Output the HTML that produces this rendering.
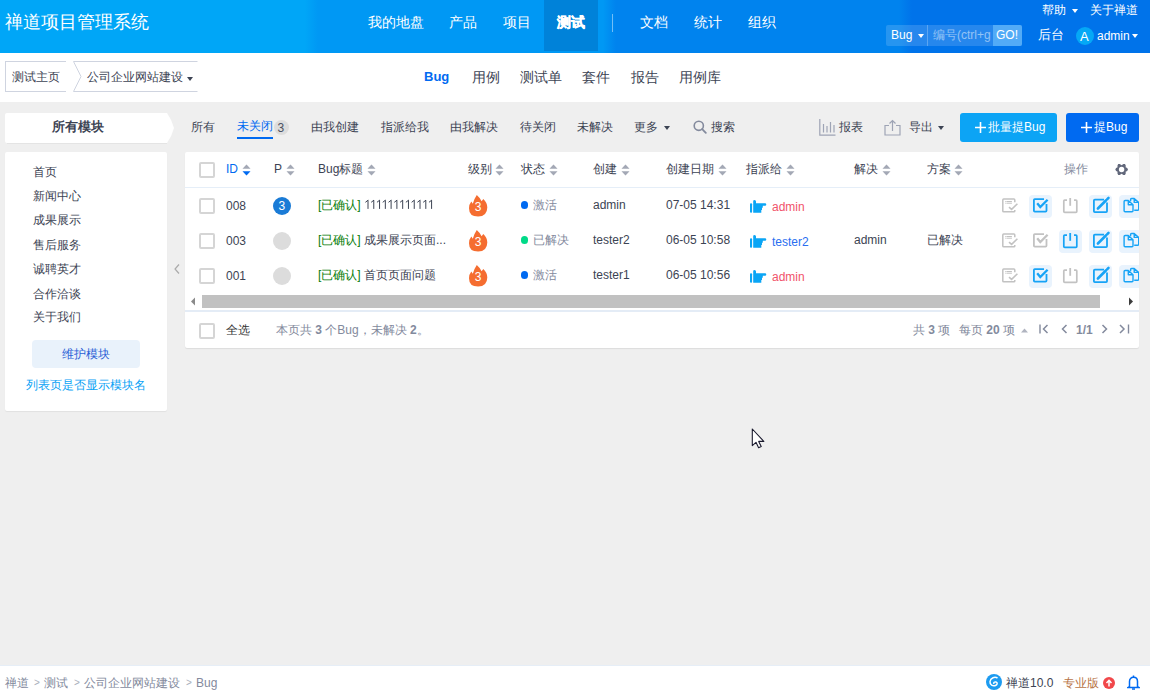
<!DOCTYPE html>
<html><head><meta charset="utf-8">
<style>
html,body{margin:0;padding:0;width:1150px;height:693px;overflow:hidden;background:#efefef;font-family:"Liberation Sans",sans-serif;color:#3c4353;}
.t{position:absolute;white-space:nowrap;line-height:1;}
.abs{position:absolute;}
#hdr{position:absolute;left:0;top:0;width:1150px;height:53px;background:linear-gradient(to right,#00a6f7 0,#00a6f7 305px,#0098f4 318px,#0098f4 603px,#0083ee 616px,#0083ee 899px,#0073ea 912px,#0073ea 1150px);}
#sub{position:absolute;left:0;top:53px;width:1150px;height:49px;background:#fff;}
.w{color:#fff;}
.cb{position:absolute;width:12px;height:12px;border:2px solid #d5d5d5;border-radius:2px;background:#fff;}
.sort{position:absolute;width:8px;height:11px;}
#foot{position:absolute;left:0;top:665px;width:1150px;height:28px;background:#fff;border-top:1px solid #e6eef7;box-sizing:border-box;}
</style></head><body>
<!-- header -->
<div id="hdr">
  <div class="t w" style="left:5px;top:13px;font-size:18px;">禅道项目管理系统</div>
  <div class="t w" style="left:368px;top:15px;font-size:14px;">我的地盘</div>
  <div class="t w" style="left:449px;top:15px;font-size:14px;">产品</div>
  <div class="t w" style="left:503px;top:15px;font-size:14px;">项目</div>
  <div class="abs" style="left:544px;top:0;width:54px;height:51px;background:#0082d9;"></div>
  <div class="t w" style="left:557px;top:15px;font-size:14px;font-weight:bold;-webkit-text-stroke:0.4px #fff;">测试</div>
  <div class="abs" style="left:612px;top:14px;width:1px;height:18px;background:rgba(255,255,255,.45);"></div>
  <div class="t w" style="left:640px;top:15px;font-size:14px;">文档</div>
  <div class="t w" style="left:694px;top:15px;font-size:14px;">统计</div>
  <div class="t w" style="left:748px;top:15px;font-size:14px;">组织</div>
  <div class="t w" style="left:1042px;top:4px;font-size:12px;">帮助</div>
  <div class="abs" style="left:1072px;top:9px;width:0;height:0;border-left:3.5px solid transparent;border-right:3.5px solid transparent;border-top:4px solid #fff;"></div>
  <div class="t w" style="left:1090px;top:4px;font-size:12px;">关于禅道</div>
  <div class="abs" style="left:886px;top:25px;width:136px;height:21px;background:rgba(255,255,255,.15);border-radius:2px;"></div>
  <div class="t w" style="left:891px;top:29px;font-size:12px;">Bug</div>
  <div class="abs" style="left:918px;top:34px;width:0;height:0;border-left:3.5px solid transparent;border-right:3.5px solid transparent;border-top:4px solid #fff;"></div>
  <div class="abs" style="left:927px;top:25px;width:1px;height:21px;background:rgba(255,255,255,.25);"></div>
  <div class="t" style="left:933px;top:29px;font-size:12px;color:rgba(255,255,255,.5);">编号(ctrl+g</div>
  <div class="abs" style="left:993px;top:25px;width:29px;height:21px;background:#52abf7;border-radius:0 2px 2px 0;"></div>
  <div class="t w" style="left:996px;top:29px;font-size:12px;">GO!</div>
  <div class="t w" style="left:1038px;top:28px;font-size:13px;">后台</div>
  <div class="abs" style="left:1076px;top:27px;width:18px;height:18px;border-radius:50%;background:#05a8f6;"></div>
  <div class="t w" style="left:1080px;top:30px;font-size:13px;">A</div>
  <div class="t w" style="left:1097px;top:30px;font-size:12px;">admin</div>
  <div class="abs" style="left:1132px;top:34px;width:0;height:0;border-left:3.5px solid transparent;border-right:3.5px solid transparent;border-top:4px solid #fff;"></div>
</div>
<!-- subheader -->
<div id="sub">
  <div class="abs" style="left:5px;top:8px;width:60px;height:29px;border:1px solid #cfd4e0;border-right:none;"></div>
  <div class="t" style="left:12px;top:18px;font-size:12px;">测试主页</div>
  <svg class="abs" style="left:73px;top:8px" width="125" height="31"><path d="M124.5 0.5 H0.5 L8 15.5 L0.5 30.5 H124.5" fill="none" stroke="#cfd4e0"/></svg>
  <div class="t" style="left:87px;top:18px;font-size:12px;">公司企业网站建设</div>
  <div class="abs" style="left:187px;top:24px;width:0;height:0;border-left:3.5px solid transparent;border-right:3.5px solid transparent;border-top:4px solid #3c4353;"></div>
  <div class="t" style="left:424px;top:17px;font-size:13px;font-weight:bold;color:#006af1;">Bug</div>
  <div class="t" style="left:472px;top:17px;font-size:14px;">用例</div>
  <div class="t" style="left:520px;top:17px;font-size:14px;">测试单</div>
  <div class="t" style="left:582px;top:17px;font-size:14px;">套件</div>
  <div class="t" style="left:631px;top:17px;font-size:14px;">报告</div>
  <div class="t" style="left:679px;top:17px;font-size:14px;">用例库</div>
</div>
<!-- sidebar -->
<svg class="abs" style="left:5px;top:113px" width="170" height="31"><path d="M2 0 H162 Q167 7 169 15 Q167 23 162 30 H2 Q0 30 0 28 V2 Q0 0 2 0Z" fill="#fff"/><path d="M2 30.5 H162" stroke="#e4e4e4"/></svg>
<div class="t" style="left:52px;top:121px;font-size:12.5px;font-weight:bold;">所有模块</div>
<div class="abs" style="left:5px;top:152px;width:162px;height:259px;background:#fff;border-radius:2px;box-shadow:0 1px 1px rgba(0,0,0,.06);"></div>
<div class="t" style="left:33px;top:166px;font-size:12px;">首页</div>
<div class="t" style="left:33px;top:190px;font-size:12px;">新闻中心</div>
<div class="t" style="left:33px;top:214px;font-size:12px;">成果展示</div>
<div class="t" style="left:33px;top:239px;font-size:12px;">售后服务</div>
<div class="t" style="left:33px;top:263px;font-size:12px;">诚聘英才</div>
<div class="t" style="left:33px;top:288px;font-size:12px;">合作洽谈</div>
<div class="t" style="left:33px;top:311px;font-size:12px;">关于我们</div>
<div class="abs" style="left:32px;top:340px;width:108px;height:28px;background:#e9f2fb;border-radius:4px;"></div>
<div class="t" style="left:62px;top:347.5px;font-size:12px;color:#2a5fd6;">维护模块</div>
<div class="t" style="left:26px;top:379px;font-size:12px;color:#0aa2f5;">列表页是否显示模块名</div>
<svg class="abs" style="left:174px;top:264px" width="6" height="10"><path d="M5 0.5 L1 5 L5 9.5" fill="none" stroke="#aaa" stroke-width="1.2"/></svg>

<!-- toolbar -->
<div class="t" style="left:191px;top:121px;font-size:12px;">所有</div>
<div class="t" style="left:237px;top:120px;font-size:12px;color:#006af1;">未关闭</div>
<div class="abs" style="left:237px;top:137px;width:36px;height:2px;background:#006af1;"></div>
<div class="abs" style="left:273.5px;top:120px;width:15px;height:15px;border-radius:50%;background:#ddd;"></div>
<div class="t" style="left:277.5px;top:122px;font-size:12px;color:#4a5060;">3</div>
<div class="t" style="left:311px;top:121px;font-size:12px;">由我创建</div>
<div class="t" style="left:381px;top:121px;font-size:12px;">指派给我</div>
<div class="t" style="left:450px;top:121px;font-size:12px;">由我解决</div>
<div class="t" style="left:520px;top:121px;font-size:12px;">待关闭</div>
<div class="t" style="left:577px;top:121px;font-size:12px;">未解决</div>
<div class="t" style="left:634px;top:121px;font-size:12px;">更多</div>
<div class="abs" style="left:664px;top:126px;width:0;height:0;border-left:3.5px solid transparent;border-right:3.5px solid transparent;border-top:4px solid #3c4353;"></div>
<svg class="abs" style="left:693px;top:120px" width="14" height="14"><circle cx="5.8" cy="5.8" r="4.6" fill="none" stroke="#838a9d" stroke-width="1.6"/><path d="M9.2 9.2 L12.8 12.8" stroke="#838a9d" stroke-width="1.8" stroke-linecap="round"/></svg>
<div class="t" style="left:711px;top:121px;font-size:12px;">搜索</div>
<svg class="abs" style="left:819px;top:119px" width="17" height="17"><path d="M0.8 0 V16.2 H16.5" fill="none" stroke="#9ea4b5" stroke-width="1.2"/><path d="M4.5 5 V13.5 M8 7 V13.5 M11.5 3 V13.5 M15 6 V13.5" stroke="#9ea4b5" stroke-width="1.2"/></svg>
<div class="t" style="left:839px;top:121px;font-size:12px;">报表</div>
<svg class="abs" style="left:884px;top:119px" width="17" height="17"><path d="M5 6.5 H1 V16 H16 V6.5 H12" fill="none" stroke="#9ea4b5" stroke-width="1.2"/><path d="M8.5 12 V1.5 M5.5 4.5 L8.5 1.5 L11.5 4.5" fill="none" stroke="#9ea4b5" stroke-width="1.2"/></svg>
<div class="t" style="left:909px;top:121px;font-size:12px;">导出</div>
<div class="abs" style="left:938px;top:126px;width:0;height:0;border-left:3.5px solid transparent;border-right:3.5px solid transparent;border-top:4px solid #3c4353;"></div>
<div class="abs" style="left:960px;top:113px;width:97px;height:29px;background:#0ca4f5;border-radius:3px;"></div>
<svg class="abs" style="left:975px;top:122px" width="11" height="11"><path d="M5.5 0 V11 M0 5.5 H11" stroke="#fff" stroke-width="1.6"/></svg>
<div class="t w" style="left:988px;top:121px;font-size:12px;">批量提Bug</div>
<div class="abs" style="left:1066px;top:113px;width:73px;height:29px;background:#006af1;border-radius:3px;"></div>
<svg class="abs" style="left:1081px;top:122px" width="11" height="11"><path d="M5.5 0 V11 M0 5.5 H11" stroke="#fff" stroke-width="1.6"/></svg>
<div class="t w" style="left:1094px;top:121px;font-size:12px;">提Bug</div>

<!-- table panel -->
<div class="abs" style="left:185px;top:152px;width:954px;height:196px;background:#fff;border-radius:2px;box-shadow:0 1px 1px rgba(0,0,0,.08);"></div>
<div class="abs" style="left:185px;top:187px;width:954px;height:1px;background:#e5eef8;"></div>
<div class="cb" style="left:199px;top:162px;"></div>
<div class="t" style="left:226px;top:163px;font-size:12px;color:#006af1;">ID</div>
<svg class="abs" style="left:241.5px;top:163.5px" width="9" height="12"><path d="M4.5 0.5 L8.5 4.8 H0.5Z" fill="#a3a8b5"/><path d="M4.5 11.5 L8.5 7.2 H0.5Z" fill="#006af1"/></svg>
<div class="t" style="left:274px;top:163px;font-size:12px;">P</div>
<svg class="abs" style="left:285.5px;top:163.5px" width="9" height="12"><path d="M4.5 0.5 L8.5 4.8 H0.5Z" fill="#a3a8b5"/><path d="M4.5 11.5 L8.5 7.2 H0.5Z" fill="#a3a8b5"/></svg>
<div class="t" style="left:318px;top:163px;font-size:12px;">Bug标题</div>
<svg class="abs" style="left:366.5px;top:163.5px" width="9" height="12"><path d="M4.5 0.5 L8.5 4.8 H0.5Z" fill="#a3a8b5"/><path d="M4.5 11.5 L8.5 7.2 H0.5Z" fill="#a3a8b5"/></svg>
<div class="t" style="left:468px;top:163px;font-size:12px;">级别</div>
<svg class="abs" style="left:495px;top:163.5px" width="9" height="12"><path d="M4.5 0.5 L8.5 4.8 H0.5Z" fill="#a3a8b5"/><path d="M4.5 11.5 L8.5 7.2 H0.5Z" fill="#a3a8b5"/></svg>
<div class="t" style="left:521px;top:163px;font-size:12px;">状态</div>
<svg class="abs" style="left:548.5px;top:163.5px" width="9" height="12"><path d="M4.5 0.5 L8.5 4.8 H0.5Z" fill="#a3a8b5"/><path d="M4.5 11.5 L8.5 7.2 H0.5Z" fill="#a3a8b5"/></svg>
<div class="t" style="left:593px;top:163px;font-size:12px;">创建</div>
<svg class="abs" style="left:620.5px;top:163.5px" width="9" height="12"><path d="M4.5 0.5 L8.5 4.8 H0.5Z" fill="#a3a8b5"/><path d="M4.5 11.5 L8.5 7.2 H0.5Z" fill="#a3a8b5"/></svg>
<div class="t" style="left:666px;top:163px;font-size:12px;">创建日期</div>
<svg class="abs" style="left:717.5px;top:163.5px" width="9" height="12"><path d="M4.5 0.5 L8.5 4.8 H0.5Z" fill="#a3a8b5"/><path d="M4.5 11.5 L8.5 7.2 H0.5Z" fill="#a3a8b5"/></svg>
<div class="t" style="left:746px;top:163px;font-size:12px;">指派给</div>
<svg class="abs" style="left:785.5px;top:163.5px" width="9" height="12"><path d="M4.5 0.5 L8.5 4.8 H0.5Z" fill="#a3a8b5"/><path d="M4.5 11.5 L8.5 7.2 H0.5Z" fill="#a3a8b5"/></svg>
<div class="t" style="left:854px;top:163px;font-size:12px;">解决</div>
<svg class="abs" style="left:881.5px;top:163.5px" width="9" height="12"><path d="M4.5 0.5 L8.5 4.8 H0.5Z" fill="#a3a8b5"/><path d="M4.5 11.5 L8.5 7.2 H0.5Z" fill="#a3a8b5"/></svg>
<div class="t" style="left:927px;top:163px;font-size:12px;">方案</div>
<svg class="abs" style="left:954px;top:163.5px" width="9" height="12"><path d="M4.5 0.5 L8.5 4.8 H0.5Z" fill="#a3a8b5"/><path d="M4.5 11.5 L8.5 7.2 H0.5Z" fill="#a3a8b5"/></svg>
<div class="t" style="left:1064px;top:163px;font-size:12px;color:#838a9d;">操作</div>
<svg class="abs" style="left:1114px;top:163px" width="16" height="14"><path fill-rule="evenodd" fill="#62687b" d="M4.2 1 L5.8 1 L7.6 2.2 L9.4 1 L11 1 L11.8 2.7 L11.6 4.2 L13.2 5 L14 6.5 L13.2 8 L11.6 8.8 L11.8 10.3 L11 12 L9.4 12 L7.6 10.8 L5.8 12 L4.2 12 L3.4 10.3 L3.6 8.8 L2.1 8 L1.3 6.5 L2.1 5 L3.6 4.2 L3.4 2.7Z M10.3 6.5 A2.7 2.7 0 1 0 4.9 6.5 A2.7 2.7 0 1 0 10.3 6.5Z"/></svg>
<div class="cb" style="left:199px;top:198px;"></div>
<div class="t" style="left:226px;top:200px;font-size:12px;">008</div>
<div class="abs" style="left:273px;top:197px;width:18px;height:18px;border-radius:50%;background:#1a7bd6;"></div><div class="t w" style="left:278.5px;top:200px;font-size:12px;">3</div>
<div class="t" style="left:318px;top:199px;font-size:12px;"><span style="color:#067c06">[已确认]</span> </div>
<svg class="abs" style="left:364px;top:199px" width="72" height="12"><path d="M4.00 1.2 V9.9 M1.40 3.3 L4.20 1.1 M9.78 1.2 V9.9 M7.18 3.3 L9.98 1.1 M15.56 1.2 V9.9 M12.96 3.3 L15.76 1.1 M21.34 1.2 V9.9 M18.74 3.3 L21.54 1.1 M27.12 1.2 V9.9 M24.52 3.3 L27.32 1.1 M32.90 1.2 V9.9 M30.30 3.3 L33.10 1.1 M38.68 1.2 V9.9 M36.08 3.3 L38.88 1.1 M44.46 1.2 V9.9 M41.86 3.3 L44.66 1.1 M50.24 1.2 V9.9 M47.64 3.3 L50.44 1.1 M56.02 1.2 V9.9 M53.42 3.3 L56.22 1.1 M61.80 1.2 V9.9 M59.20 3.3 L62.00 1.1 M67.58 1.2 V9.9 M64.98 3.3 L67.78 1.1 " fill="none" stroke="#3c4353" stroke-width="1"/></svg>
<svg class="abs" style="left:464px;top:192px" width="28" height="27"><path d="M12.8 2.9 Q15.6 5.2 17.6 9.3 L19.3 7.1 Q23.3 10.8 23.3 15.6 Q23.1 24.6 14.1 24.6 Q5 24.5 5 16.2 Q5 12.2 7.3 9.4 L8.8 11.7 Q10.4 6.2 12.8 2.9Z" fill="#f56d30"/><text x="14.1" y="19.1" font-size="12" text-anchor="middle" fill="#fff" font-family="Liberation Sans">3</text></svg>
<div class="abs" style="left:521px;top:201px;width:7px;height:8px;border-radius:3.5px;background:#006af1;"></div>
<div class="t" style="left:533px;top:199px;font-size:12px;color:#838a9d;">激活</div>
<div class="t" style="left:593px;top:199px;font-size:12px;">admin</div>
<div class="t" style="left:666px;top:199px;font-size:12px;">07-05 14:31</div>
<svg class="abs" style="left:747px;top:197px" width="22" height="18"><rect x="3" y="6.2" width="2.1" height="9.6" rx="1" fill="#0aa5f5"/><path d="M6.2 15.8 V4.2 Q6.2 3 7.5 3 Q9 3.1 9 4.6 V6.2 H18 Q19.3 6.2 19.3 7.45 Q19.3 8.7 18 8.7 H15.8 V10.7 H15 V12.9 H14.3 V15.8Z" fill="#0aa5f5"/></svg>
<div class="t" style="left:772px;top:201px;font-size:12px;color:#f1526b;">admin</div>
<div class="cb" style="left:199px;top:233px;"></div>
<div class="t" style="left:226px;top:235px;font-size:12px;">003</div>
<div class="abs" style="left:273px;top:232px;width:18px;height:18px;border-radius:50%;background:#dcdcdc;"></div>
<div class="t" style="left:318px;top:234px;font-size:12px;"><span style="color:#067c06">[已确认]</span> 成果展示页面...</div>
<svg class="abs" style="left:464px;top:227px" width="28" height="27"><path d="M12.8 2.9 Q15.6 5.2 17.6 9.3 L19.3 7.1 Q23.3 10.8 23.3 15.6 Q23.1 24.6 14.1 24.6 Q5 24.5 5 16.2 Q5 12.2 7.3 9.4 L8.8 11.7 Q10.4 6.2 12.8 2.9Z" fill="#f56d30"/><text x="14.1" y="19.1" font-size="12" text-anchor="middle" fill="#fff" font-family="Liberation Sans">3</text></svg>
<div class="abs" style="left:521px;top:236px;width:7px;height:8px;border-radius:3.5px;background:#00da88;"></div>
<div class="t" style="left:533px;top:234px;font-size:12px;color:#838a9d;">已解决</div>
<div class="t" style="left:593px;top:234px;font-size:12px;">tester2</div>
<div class="t" style="left:666px;top:234px;font-size:12px;">06-05 10:58</div>
<svg class="abs" style="left:747px;top:232px" width="22" height="18"><rect x="3" y="6.2" width="2.1" height="9.6" rx="1" fill="#0aa5f5"/><path d="M6.2 15.8 V4.2 Q6.2 3 7.5 3 Q9 3.1 9 4.6 V6.2 H18 Q19.3 6.2 19.3 7.45 Q19.3 8.7 18 8.7 H15.8 V10.7 H15 V12.9 H14.3 V15.8Z" fill="#0aa5f5"/></svg>
<div class="t" style="left:772px;top:236px;font-size:12px;color:#2a6ef0;">tester2</div>
<div class="t" style="left:854px;top:234px;font-size:12px;">admin</div>
<div class="t" style="left:927px;top:234px;font-size:12px;">已解决</div>
<div class="cb" style="left:199px;top:268px;"></div>
<div class="t" style="left:226px;top:270px;font-size:12px;">001</div>
<div class="abs" style="left:273px;top:267px;width:18px;height:18px;border-radius:50%;background:#dcdcdc;"></div>
<div class="t" style="left:318px;top:269px;font-size:12px;"><span style="color:#067c06">[已确认]</span> 首页页面问题</div>
<svg class="abs" style="left:464px;top:262px" width="28" height="27"><path d="M12.8 2.9 Q15.6 5.2 17.6 9.3 L19.3 7.1 Q23.3 10.8 23.3 15.6 Q23.1 24.6 14.1 24.6 Q5 24.5 5 16.2 Q5 12.2 7.3 9.4 L8.8 11.7 Q10.4 6.2 12.8 2.9Z" fill="#f56d30"/><text x="14.1" y="19.1" font-size="12" text-anchor="middle" fill="#fff" font-family="Liberation Sans">3</text></svg>
<div class="abs" style="left:521px;top:271px;width:7px;height:8px;border-radius:3.5px;background:#006af1;"></div>
<div class="t" style="left:533px;top:269px;font-size:12px;color:#838a9d;">激活</div>
<div class="t" style="left:593px;top:269px;font-size:12px;">tester1</div>
<div class="t" style="left:666px;top:269px;font-size:12px;">06-05 10:56</div>
<svg class="abs" style="left:747px;top:267px" width="22" height="18"><rect x="3" y="6.2" width="2.1" height="9.6" rx="1" fill="#0aa5f5"/><path d="M6.2 15.8 V4.2 Q6.2 3 7.5 3 Q9 3.1 9 4.6 V6.2 H18 Q19.3 6.2 19.3 7.45 Q19.3 8.7 18 8.7 H15.8 V10.7 H15 V12.9 H14.3 V15.8Z" fill="#0aa5f5"/></svg>
<div class="t" style="left:772px;top:271px;font-size:12px;color:#f1526b;">admin</div>
<div class="abs" style="left:995px;top:188px;width:144px;height:106px;overflow:hidden;">
<svg class="abs" style="left:4px;top:7px" width="23" height="23"><path d="M15.8 7.2 V5 Q15.8 4.1 14.9 4.1 H4.7 Q3.8 4.1 3.8 5 V15.9 Q3.8 16.8 4.7 16.8 H14.9 Q15.8 16.8 15.8 15.9 V15" fill="none" stroke="#c2c2c2" stroke-width="1.5"/><path d="M6.1 6.5 H6.8 M7.4 6.5 H12.9 M6.1 8.2 H6.8 M7.4 8.2 H12.9" stroke="#c2c2c2" stroke-width="1"/><path d="M10 12.1 L12.6 14.4 L18.4 8.7" fill="none" stroke="#c2c2c2" stroke-width="1.6"/></svg>
<div class="abs" style="left:34px;top:7px;width:23px;height:23px;background:#e9f3fd;border-radius:4px;"></div>
<svg class="abs" style="left:34px;top:7px" width="23" height="23"><path d="M15 4.2 H5.8 Q4.9 4.2 4.9 5.1 V15.8 Q4.9 16.7 5.8 16.7 H16.6 Q17.5 16.7 17.5 15.8 V9" fill="none" stroke="#16a3f6" stroke-width="1.8"/><path d="M8.2 8.2 L11.3 12 L18.6 4.8" fill="none" stroke="#16a3f6" stroke-width="2.3"/></svg>
<svg class="abs" style="left:64px;top:7px" width="23" height="23"><path d="M8 5.1 H5.7 Q4.8 5.1 4.8 6 V16.4 Q4.8 17.3 5.7 17.3 H16.9 Q17.8 17.3 17.8 16.4 V6 Q17.8 5.1 16.9 5.1 H15" fill="none" stroke="#c2c2c2" stroke-width="1.7"/><path d="M11.2 3 V10.8" stroke="#c2c2c2" stroke-width="1.8"/></svg>
<div class="abs" style="left:94px;top:7px;width:23px;height:23px;background:#e9f3fd;border-radius:4px;"></div>
<svg class="abs" style="left:94px;top:7px" width="23" height="23"><path d="M15 4.7 H5.8 Q4.9 4.7 4.9 5.6 V16.3 Q4.9 17.2 5.8 17.2 H17.1 Q18 17.2 18 16.3 V7.4" fill="none" stroke="#16a3f6" stroke-width="1.8"/><path d="M8.9 13.5 L16.9 5.5 M18.1 4.3 L19.5 2.9" stroke="#16a3f6" stroke-width="2.6" stroke-linecap="round"/></svg>
<div class="abs" style="left:124px;top:7px;width:23px;height:23px;background:#e9f3fd;border-radius:4px;"></div>
<svg class="abs" style="left:124px;top:7px" width="23" height="23"><path d="M9.3 5.5 H6.1 Q5.1 5.5 5.1 6.5 V15.8 Q5.1 16.8 6.1 16.8 H13 Q14 16.8 14 15.8 V9.8 Z M9.3 5.5 V9.8 H14 M9.3 5.5 L14 9.8" fill="none" stroke="#16a3f6" stroke-width="1.4" stroke-linejoin="round"/><path d="M11.6 6.3 V4.5 Q11.6 3.5 12.6 3.5 H15.2 L19.7 7.4 V14.2 Q19.7 15.2 18.7 15.2 H15.2 M15.2 3.5 V7.4 H19.7" fill="none" stroke="#16a3f6" stroke-width="1.4" stroke-linejoin="round"/></svg>
<svg class="abs" style="left:4px;top:42px" width="23" height="23"><path d="M15.8 7.2 V5 Q15.8 4.1 14.9 4.1 H4.7 Q3.8 4.1 3.8 5 V15.9 Q3.8 16.8 4.7 16.8 H14.9 Q15.8 16.8 15.8 15.9 V15" fill="none" stroke="#c2c2c2" stroke-width="1.5"/><path d="M6.1 6.5 H6.8 M7.4 6.5 H12.9 M6.1 8.2 H6.8 M7.4 8.2 H12.9" stroke="#c2c2c2" stroke-width="1"/><path d="M10 12.1 L12.6 14.4 L18.4 8.7" fill="none" stroke="#c2c2c2" stroke-width="1.6"/></svg>
<svg class="abs" style="left:34px;top:42px" width="23" height="23"><path d="M15 4.2 H5.8 Q4.9 4.2 4.9 5.1 V15.8 Q4.9 16.7 5.8 16.7 H16.6 Q17.5 16.7 17.5 15.8 V9" fill="none" stroke="#c2c2c2" stroke-width="1.8"/><path d="M8.2 8.2 L11.3 12 L18.6 4.8" fill="none" stroke="#c2c2c2" stroke-width="2.3"/></svg>
<div class="abs" style="left:64px;top:42px;width:23px;height:23px;background:#e9f3fd;border-radius:4px;"></div>
<svg class="abs" style="left:64px;top:42px" width="23" height="23"><path d="M8 5.1 H5.7 Q4.8 5.1 4.8 6 V16.4 Q4.8 17.3 5.7 17.3 H16.9 Q17.8 17.3 17.8 16.4 V6 Q17.8 5.1 16.9 5.1 H15" fill="none" stroke="#16a3f6" stroke-width="1.7"/><path d="M11.2 3 V10.8" stroke="#16a3f6" stroke-width="1.8"/></svg>
<div class="abs" style="left:94px;top:42px;width:23px;height:23px;background:#e9f3fd;border-radius:4px;"></div>
<svg class="abs" style="left:94px;top:42px" width="23" height="23"><path d="M15 4.7 H5.8 Q4.9 4.7 4.9 5.6 V16.3 Q4.9 17.2 5.8 17.2 H17.1 Q18 17.2 18 16.3 V7.4" fill="none" stroke="#16a3f6" stroke-width="1.8"/><path d="M8.9 13.5 L16.9 5.5 M18.1 4.3 L19.5 2.9" stroke="#16a3f6" stroke-width="2.6" stroke-linecap="round"/></svg>
<div class="abs" style="left:124px;top:42px;width:23px;height:23px;background:#e9f3fd;border-radius:4px;"></div>
<svg class="abs" style="left:124px;top:42px" width="23" height="23"><path d="M9.3 5.5 H6.1 Q5.1 5.5 5.1 6.5 V15.8 Q5.1 16.8 6.1 16.8 H13 Q14 16.8 14 15.8 V9.8 Z M9.3 5.5 V9.8 H14 M9.3 5.5 L14 9.8" fill="none" stroke="#16a3f6" stroke-width="1.4" stroke-linejoin="round"/><path d="M11.6 6.3 V4.5 Q11.6 3.5 12.6 3.5 H15.2 L19.7 7.4 V14.2 Q19.7 15.2 18.7 15.2 H15.2 M15.2 3.5 V7.4 H19.7" fill="none" stroke="#16a3f6" stroke-width="1.4" stroke-linejoin="round"/></svg>
<svg class="abs" style="left:4px;top:77px" width="23" height="23"><path d="M15.8 7.2 V5 Q15.8 4.1 14.9 4.1 H4.7 Q3.8 4.1 3.8 5 V15.9 Q3.8 16.8 4.7 16.8 H14.9 Q15.8 16.8 15.8 15.9 V15" fill="none" stroke="#c2c2c2" stroke-width="1.5"/><path d="M6.1 6.5 H6.8 M7.4 6.5 H12.9 M6.1 8.2 H6.8 M7.4 8.2 H12.9" stroke="#c2c2c2" stroke-width="1"/><path d="M10 12.1 L12.6 14.4 L18.4 8.7" fill="none" stroke="#c2c2c2" stroke-width="1.6"/></svg>
<div class="abs" style="left:34px;top:77px;width:23px;height:23px;background:#e9f3fd;border-radius:4px;"></div>
<svg class="abs" style="left:34px;top:77px" width="23" height="23"><path d="M15 4.2 H5.8 Q4.9 4.2 4.9 5.1 V15.8 Q4.9 16.7 5.8 16.7 H16.6 Q17.5 16.7 17.5 15.8 V9" fill="none" stroke="#16a3f6" stroke-width="1.8"/><path d="M8.2 8.2 L11.3 12 L18.6 4.8" fill="none" stroke="#16a3f6" stroke-width="2.3"/></svg>
<svg class="abs" style="left:64px;top:77px" width="23" height="23"><path d="M8 5.1 H5.7 Q4.8 5.1 4.8 6 V16.4 Q4.8 17.3 5.7 17.3 H16.9 Q17.8 17.3 17.8 16.4 V6 Q17.8 5.1 16.9 5.1 H15" fill="none" stroke="#c2c2c2" stroke-width="1.7"/><path d="M11.2 3 V10.8" stroke="#c2c2c2" stroke-width="1.8"/></svg>
<div class="abs" style="left:94px;top:77px;width:23px;height:23px;background:#e9f3fd;border-radius:4px;"></div>
<svg class="abs" style="left:94px;top:77px" width="23" height="23"><path d="M15 4.7 H5.8 Q4.9 4.7 4.9 5.6 V16.3 Q4.9 17.2 5.8 17.2 H17.1 Q18 17.2 18 16.3 V7.4" fill="none" stroke="#16a3f6" stroke-width="1.8"/><path d="M8.9 13.5 L16.9 5.5 M18.1 4.3 L19.5 2.9" stroke="#16a3f6" stroke-width="2.6" stroke-linecap="round"/></svg>
<div class="abs" style="left:124px;top:77px;width:23px;height:23px;background:#e9f3fd;border-radius:4px;"></div>
<svg class="abs" style="left:124px;top:77px" width="23" height="23"><path d="M9.3 5.5 H6.1 Q5.1 5.5 5.1 6.5 V15.8 Q5.1 16.8 6.1 16.8 H13 Q14 16.8 14 15.8 V9.8 Z M9.3 5.5 V9.8 H14 M9.3 5.5 L14 9.8" fill="none" stroke="#16a3f6" stroke-width="1.4" stroke-linejoin="round"/><path d="M11.6 6.3 V4.5 Q11.6 3.5 12.6 3.5 H15.2 L19.7 7.4 V14.2 Q19.7 15.2 18.7 15.2 H15.2 M15.2 3.5 V7.4 H19.7" fill="none" stroke="#16a3f6" stroke-width="1.4" stroke-linejoin="round"/></svg>
</div>
<div class="abs" style="left:186px;top:294px;width:952px;height:15px;background:#fff;"></div>
<div class="abs" style="left:202px;top:295px;width:898px;height:13px;background:#c1c1c1;"></div>
<svg class="abs" style="left:190px;top:297px" width="7" height="9"><path d="M5 0.5 V8.5 L1 4.5Z" fill="#8a8a8a"/></svg>
<svg class="abs" style="left:1128px;top:297px" width="7" height="9"><path d="M1 0.5 V8.5 L5 4.5Z" fill="#3c3c3c"/></svg>
<div class="abs" style="left:185px;top:310px;width:954px;height:2px;background:#e4ecf6;"></div>
<div class="cb" style="left:199px;top:323px;"></div>
<div class="t" style="left:226px;top:324px;font-size:12px;color:#333;">全选</div>
<div class="t" style="left:276px;top:324px;font-size:12px;color:#838a9d;">本页共 <b>3</b> 个Bug，未解决 <b>2</b>。</div>
<div class="t" style="left:913px;top:324px;font-size:12px;color:#838a9d;">共 <b>3</b> 项</div>
<div class="t" style="left:959px;top:324px;font-size:12px;color:#838a9d;">每页 <b>20</b> 项</div>
<svg class="abs" style="left:1021px;top:328px" width="7" height="5"><path d="M0 4.5 L3.5 0.5 L7 4.5Z" fill="#b0b4c0"/></svg>
<svg class="abs" style="left:1039px;top:324px" width="10" height="10"><path d="M1 0.5 V9.5" stroke="#838a9d" stroke-width="1.4"/><path d="M8.5 1 L4.5 5 L8.5 9" fill="none" stroke="#838a9d" stroke-width="1.5"/></svg>
<svg class="abs" style="left:1060px;top:324px" width="8" height="10"><path d="M6.5 1 L2.5 5 L6.5 9" fill="none" stroke="#838a9d" stroke-width="1.5"/></svg>
<div class="t" style="left:1076px;top:324px;font-size:12px;color:#838a9d;font-weight:bold;">1/1</div>
<svg class="abs" style="left:1101px;top:324px" width="8" height="10"><path d="M1.5 1 L5.5 5 L1.5 9" fill="none" stroke="#838a9d" stroke-width="1.5"/></svg>
<svg class="abs" style="left:1119px;top:324px" width="12" height="10"><path d="M1 1 L5 5 L1 9" fill="none" stroke="#838a9d" stroke-width="1.5"/><path d="M9.5 0.5 V9.5" stroke="#838a9d" stroke-width="1.4"/></svg>
<div id="foot"></div>
<div class="t" style="left:5px;top:676.5px;font-size:12px;color:#838a9d;">禅道</div><div class="t" style="left:34px;top:677.5px;font-size:10px;color:#a9aebb;">&gt;</div><div class="t" style="left:44px;top:676.5px;font-size:12px;color:#838a9d;">测试</div><div class="t" style="left:74px;top:677.5px;font-size:10px;color:#a9aebb;">&gt;</div><div class="t" style="left:84px;top:676.5px;font-size:12px;color:#838a9d;">公司企业网站建设</div><div class="t" style="left:186px;top:677.5px;font-size:10px;color:#a9aebb;">&gt;</div><div class="t" style="left:196px;top:676.5px;font-size:12px;color:#838a9d;">Bug</div>
<svg class="abs" style="left:986px;top:674px" width="16" height="16" viewBox="0 0 16 16"><circle cx="8" cy="8" r="8" fill="#1d9bf0"/><path d="M11.5 4 C9 2.5 4.5 3.5 4 7.5 C3.6 11 7 12.5 9.5 11.5 C11.5 10.7 11.8 8.5 10 8 C8.5 7.6 7.3 8.6 8 9.8" fill="none" stroke="#fff" stroke-width="1.5"/></svg>
<div class="t" style="left:1006px;top:677px;font-size:12px;color:#3c4353;">禅道10.0</div>
<div class="t" style="left:1063px;top:677px;font-size:12px;color:#b97547;">专业版</div>
<svg class="abs" style="left:1103px;top:677px" width="12" height="12"><circle cx="6" cy="6" r="6" fill="#f1474a"/><path d="M6 9.5 V3.5 M3.5 6 L6 3.3 L8.5 6" fill="none" stroke="#fff" stroke-width="1.5"/></svg>
<svg class="abs" style="left:1127px;top:675px" width="13" height="15" viewBox="0 0 13 15"><path d="M2.5 11.5 V6.5 C2.5 4 4 2.3 6.5 2.3 C9 2.3 10.5 4 10.5 6.5 V11.5 L12 12.5 H1 Z" fill="none" stroke="#006af1" stroke-width="1.5"/><path d="M6.5 0.5 V2 M5 14 H8" stroke="#006af1" stroke-width="1.5"/></svg>
<svg class="abs" style="left:751px;top:428px" width="15" height="21" viewBox="0 0 15 21"><path d="M1.3 1 V17.6 L5 14.3 L7.6 19.7 L10.2 18.6 L7.7 13.4 H12.8Z" fill="#fff" stroke="#1a1a2e" stroke-width="1.1" stroke-linejoin="round"/></svg>
</body></html>
